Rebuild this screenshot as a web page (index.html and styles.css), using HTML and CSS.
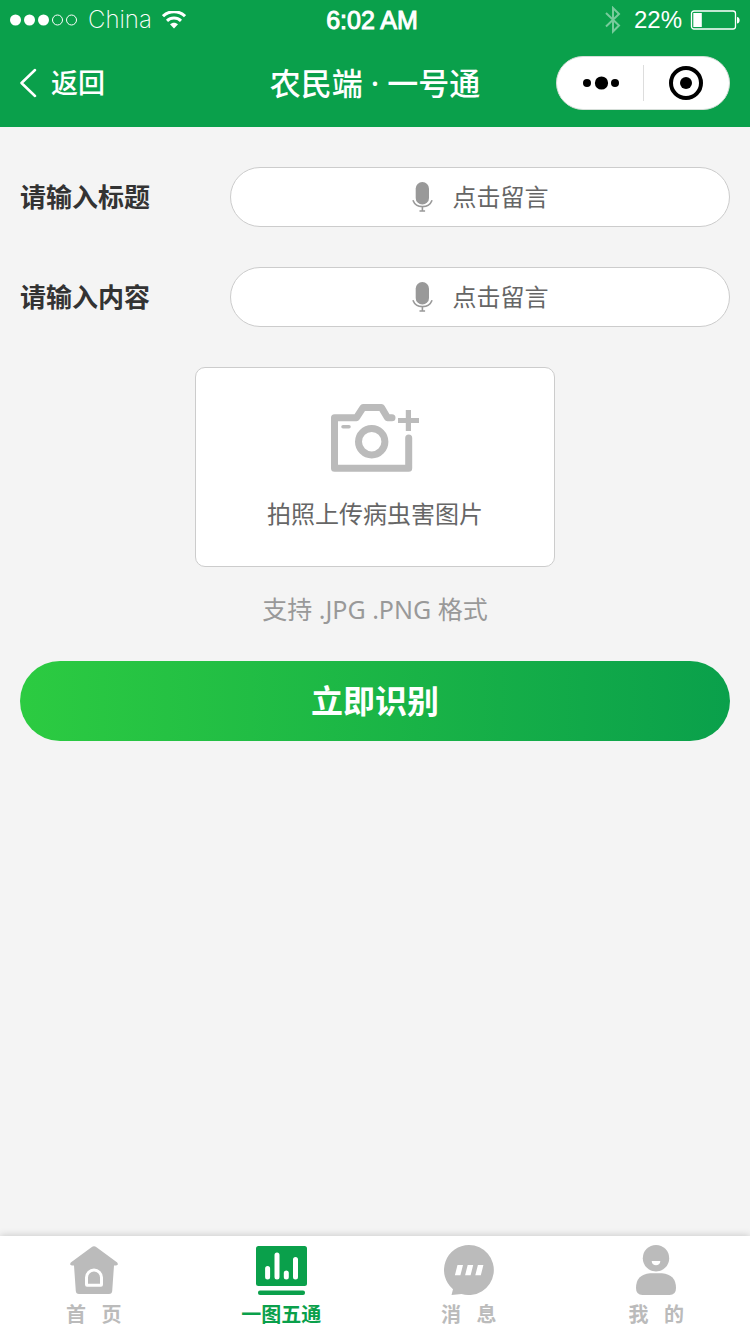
FILE: index.html
```html
<!DOCTYPE html>
<html lang="zh-CN">
<head>
<meta charset="utf-8">
<meta name="viewport" content="width=device-width, initial-scale=1">
<title>农民端 · 一号通</title>
<link rel="stylesheet" href="styles.css">
</head>
<body>
<header class="header">
  <div class="status">
    <div class="status-side">
      <svg class="signal" width="68" height="12" viewBox="0 0 68 12" aria-hidden="true">
        <g fill="#fff"><circle cx="5.5" cy="6" r="5.5"/><circle cx="19.5" cy="6" r="5.5"/><circle cx="33.5" cy="6" r="5.5"/></g>
        <g fill="none" stroke="#fff"><circle cx="47.5" cy="6" r="5"/><circle cx="61.5" cy="6" r="5"/></g>
      </svg>
      <span class="carrier">China</span>
      <svg class="wifi" width="24" height="18" viewBox="0 0 24 18" aria-hidden="true">
        <g fill="none" stroke="#fff" stroke-width="3">
          <path d="M1 5.200C7.200 -.8 16.800 -.8 23 5.200"/>
          <path d="M5 9.800C9 6.100 15 6.100 19 9.800"/>
        </g>
        <path d="M8 13.300C10.300 11.200 13.700 11.200 16 13.300L12 17.500Z" fill="#fff"/>
      </svg>
    </div>
    <span class="clock">6:02 AM</span>
    <div class="status-side status-end">
      <svg width="16" height="28" viewBox="0 0 16 28" aria-hidden="true">
        <path d="M1 7L14 19.500L8 25.500V2L14 8L1 20.500" fill="none" stroke="#fff" stroke-opacity=".45" stroke-width="2"/>
      </svg>
      <span class="percent">22%</span>
      <svg width="50" height="20" viewBox="0 0 50 20" aria-hidden="true">
        <rect x="1.500" y="1" width="44" height="18" rx="2.500" fill="none" stroke="#fff" stroke-width="1.300"/>
        <path d="M3.300 3h8.500v14H3.300zM47 7c3.500 0 3.500 6.500 0 6.500z" fill="#fff"/>
      </svg>
    </div>
  </div>
  <div class="nav">
    <button class="back" type="button">
      <svg width="17" height="30" viewBox="0 0 17 30" aria-hidden="true"><path d="M15 2L1.500 15L15 28" fill="none" stroke="#fff" stroke-width="2.500" stroke-linecap="round" stroke-linejoin="round"/></svg>
      返回
    </button>
    <h1 class="title">农民端 · 一号通</h1>
    <div class="capsule">
      <button class="capsule-button" type="button" aria-label="更多">
        <svg width="38" height="14" viewBox="0 0 38 14" aria-hidden="true"><circle cx="6" cy="7" r="4"/><circle cx="20.500" cy="7" r="6.600"/><circle cx="34" cy="7" r="4"/></svg>
      </button>
      <button class="capsule-button" type="button" aria-label="关闭">
        <svg width="34" height="34" viewBox="0 0 34 34" aria-hidden="true"><circle cx="17" cy="17" r="15" fill="none" stroke="#000" stroke-width="4"/><circle cx="17" cy="17" r="6"/></svg>
      </button>
    </div>
  </div>
</header>

<main class="main">
  <div class="field">
    <label class="label" for="voice-title">请输入标题</label>
    <button class="voice" id="voice-title" type="button">
      <svg width="21" height="30" viewBox="0 0 21 30" aria-hidden="true">
        <rect x="3.700" width="13.300" height="22.500" rx="6.600" fill="#999"/>
        <path d="M.9 18.200C4.200 26.700 16.800 26.700 20.100 18.200M10.400 24.500V29M7.500 29h5.600" fill="none" stroke="#999" stroke-width="1.600"/>
      </svg>
      点击留言
    </button>
  </div>
  <div class="field">
    <label class="label" for="voice-content">请输入内容</label>
    <button class="voice" id="voice-content" type="button">
      <svg width="21" height="30" viewBox="0 0 21 30" aria-hidden="true">
        <rect x="3.700" width="13.300" height="22.500" rx="6.600" fill="#999"/>
        <path d="M.9 18.200C4.200 26.700 16.800 26.700 20.100 18.200M10.400 24.500V29M7.500 29h5.600" fill="none" stroke="#999" stroke-width="1.600"/>
      </svg>
      点击留言
    </button>
  </div>
  <button class="upload" type="button">
    <svg width="88" height="68" viewBox="0 0 88 68" aria-hidden="true">
      <g fill="none" stroke="#bbb" stroke-width="7" stroke-linecap="round" stroke-linejoin="round">
        <path d="M77.700 34V64.200H3.500V13.700H25.500L32 3.600H50.500L56.500 13.700H61"/>
        <circle cx="40.700" cy="37.700" r="13.200"/>
      </g>
      <path d="M12 22.700H18" stroke="#bbb" stroke-width="3.500" stroke-linecap="round"/>
      <path d="M67 16.500H88M77.400 6V27" stroke="#bbb" stroke-width="5.200"/>
    </svg>
    拍照上传病虫害图片
  </button>
  <p class="hint">支持 .JPG .PNG 格式</p>
  <button class="submit" type="button">立即识别</button>
</main>

<nav class="tabs">
  <a class="tab" href="#">
    <svg width="50" height="50" viewBox="0 0 50 50" aria-hidden="true">
      <path d="M22.500 2.200Q25 .4 27.500 2.200L48.200 17.600Q50 20.500 47 20.500H45L43.200 46Q43 49 40 49H10Q7 49 6.800 46L5 20.500H3Q0 20.500 1.800 17.600Z" fill="#bbb"/>
      <path d="M18 40.200Q17.500 40.200 17.500 39.500V32.500A7.500 7.500 0 0 1 32.500 32.500V39.500Q32.500 40.200 32 40.200Z" fill="#bbb" stroke="#fff" stroke-width="3"/>
    </svg>
    首&nbsp;&nbsp;&nbsp;页
  </a>
  <a class="tab tab-active" href="#" aria-current="page">
    <svg width="51" height="50" viewBox="0 0 51 50" aria-hidden="true">
      <rect y="1" width="51" height="40" rx="2.500" fill="#0aa04b"/>
      <rect x="2" y="45.500" width="47" height="4.500" rx="2" fill="#0aa04b"/>
      <path d="M11.600 23.500V32M21 10V32M30.300 28V32M39.500 14.500V32" stroke="#fff" stroke-width="5" stroke-linecap="round"/>
    </svg>
    一图五通
  </a>
  <a class="tab" href="#">
    <svg width="50" height="50" viewBox="0 0 50 50" aria-hidden="true">
      <path d="M25 0A25 25 0 1 1 17.500 48.900L7.500 50L9 44.200A25 25 0 0 1 25 0Z" fill="#bbb"/>
      <path d="M13.500 20h5.500l-2.600 10.300h-5.500zM23.700 20h5.500l-2.600 10.300h-5.500zM33.900 20h5.500l-2.600 10.300h-5.500z" fill="#fff"/>
    </svg>
    消&nbsp;&nbsp;&nbsp;息
  </a>
  <a class="tab" href="#">
    <svg width="40" height="50" viewBox="0 0 40 50" aria-hidden="true">
      <circle cx="20" cy="13.200" r="13.200" fill="#bbb"/>
      <path d="M15.700 16H24.300C24.300 21.800 15.700 21.800 15.700 16Z" fill="#fff"/>
      <path d="M14 28.200H26Q40 29.500 40 43Q40 50 33.500 50H6.500Q0 50 0 43Q0 29.500 14 28.200Z" fill="#bbb"/>
    </svg>
    我&nbsp;&nbsp;&nbsp;的
  </a>
</nav>
</body>
</html>
```
FILE: styles.css
```css
* {
  box-sizing: border-box;
}

body {
  display: flex;
  flex-direction: column;
  min-height: 100vh;
  margin: 0;
  background: #f4f4f4;
  color: #333;
  font-family: "Noto Sans", "Noto Sans CJK SC", sans-serif;
}

button {
  margin: 0;
  padding: 0;
  border: 0;
  background: none;
  color: inherit;
  font: inherit;
  cursor: pointer;
}

svg {
  flex: none;
  display: block;
}

.header {
  padding-bottom: 1px;
  background: #0aa04b;
  color: #fff;
}

.status {
  display: grid;
  grid-template-columns: 1fr auto 1fr;
  align-items: center;
  height: 40px;
  padding: 0 10px;
  font-family: "Liberation Sans", Arial, sans-serif;
  font-size: 24px;
  line-height: 28px;
}

.status-side {
  display: flex;
  align-items: center;
  gap: 10px;
}

.status-end {
  justify-content: flex-end;
  gap: 8px;
}

.carrier {
  font-family: Inter, Roboto, sans-serif;
  font-weight: 200;
}

.clock {
  padding-right: 6px;
  font-size: 25px;
  -webkit-text-stroke: 1px #fff;
}

.percent {
  margin-left: 5px;
}

.nav {
  display: grid;
  grid-template-columns: 1fr auto 1fr;
  align-items: center;
  height: 86px;
  padding: 0 20px;
}

.back {
  display: flex;
  align-items: center;
  justify-self: start;
  gap: 14px;
  font-size: 27px;
  font-weight: 500;
  line-height: 40px;
}

.title {
  margin: 0;
  font-size: 31px;
  font-weight: 500;
  line-height: 44px;
}

.capsule {
  display: flex;
  justify-self: end;
  width: 174px;
  height: 54px;
  padding: 8px 0;
  border: 1px solid #d5ded8;
  border-radius: 27px;
  background: #fff;
}

.capsule-button {
  display: flex;
  flex: 1;
  align-items: center;
  justify-content: center;
}

.capsule-button + .capsule-button {
  border-left: 1px solid #ddd;
}

.main {
  display: flex;
  flex: 1;
  flex-direction: column;
  padding: 40px 20px;
}

.field {
  display: grid;
  grid-template-columns: 210px 1fr;
  align-items: center;
  margin-bottom: 40px;
}

.label {
  font-size: 26px;
  font-weight: 700;
  line-height: 40px;
}

.voice {
  display: flex;
  align-items: center;
  justify-content: center;
  gap: 20px;
  height: 60px;
  border: 1px solid #ccc;
  border-radius: 30px;
  background: #fff;
  color: #666;
  font-size: 24px;
  line-height: 36px;
}

.upload {
  display: flex;
  flex-direction: column;
  align-items: center;
  align-self: center;
  gap: 24px;
  width: 360px;
  height: 200px;
  padding-top: 36px;
  border: 1px solid #ccc;
  border-radius: 10px;
  background: #fff;
  color: #666;
  font-size: 24px;
  line-height: 36px;
}

.hint {
  margin: 0;
  padding: 24px 0 34px;
  color: #999;
  font-size: 25px;
  line-height: 36px;
  text-align: center;
}

.submit {
  height: 80px;
  border-radius: 40px;
  background: linear-gradient(90deg, #2ccb41, #0aa04b);
  color: #fff;
  font-size: 32px;
  font-weight: 700;
  line-height: 48px;
}

.tabs {
  display: grid;
  grid-template-columns: repeat(4, 1fr);
  height: 98px;
  background: #fff;
  box-shadow: 0 0 8px rgba(0, 0, 0, 0.2);
}

.tab {
  display: flex;
  flex-direction: column;
  align-items: center;
  gap: 5px;
  padding-top: 9px;
  color: #bbb;
  font-size: 20px;
  font-weight: 700;
  line-height: 30px;
  text-decoration: none;
}

.tab-active {
  color: #0aa04b;
}
```
